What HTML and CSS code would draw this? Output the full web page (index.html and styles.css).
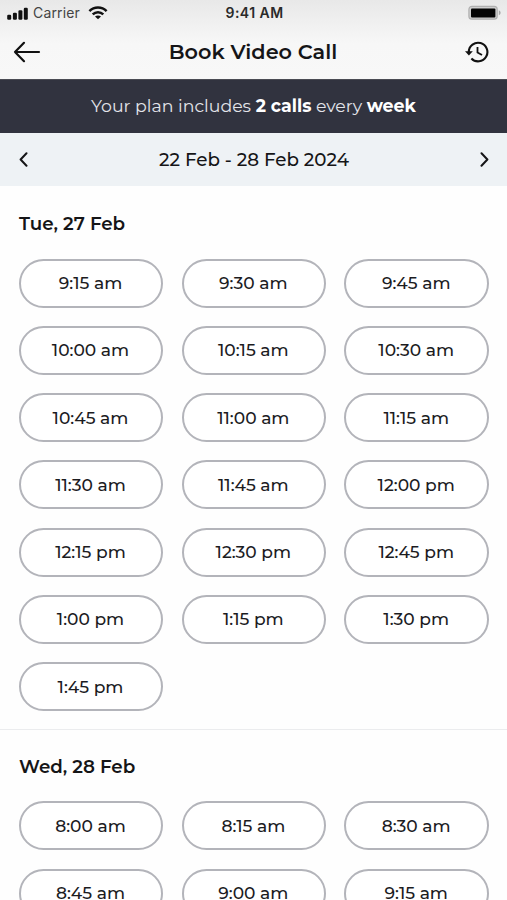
FILE: index.html
```html
<!DOCTYPE html>
<html lang="en">
<head>
<meta charset="utf-8">
<meta name="viewport" content="width=device-width, initial-scale=1">
<title>Book Video Call</title>
<link rel="stylesheet" href="styles.css">
</head>
<body>
<header class="top">
  <div class="status">
    <div class="carrier">
      <svg class="signal" width="22" height="13" viewBox="0 0 22 13"><rect x="0.2" y="7.7" width="4" height="5" rx="1.2"/><rect x="5.9" y="5.7" width="4" height="7" rx="1.2"/><rect x="11.4" y="3.2" width="4" height="9.5" rx="1.2"/><rect x="16.8" y="0.7" width="4" height="12" rx="1.2"/></svg>
      <span class="carrier-name">Carrier</span>
      <svg class="wifi" width="20" height="14" viewBox="0 0 20 14" fill="none" stroke="#111" stroke-width="2.5"><path d="M1.4 5.1C6.2 0.4 13.8 0.4 18.6 5.1"/><path d="M4.7 8.4C7.7 5.5 12.3 5.5 15.3 8.4"/><path d="M10 13.3L7 10.5C8.7 9 11.3 9 13 10.5Z" fill="#111" stroke="none"/></svg>
    </div>
    <time class="clock">9:41 AM</time>
    <svg class="battery" width="34" height="16" viewBox="0 0 34 16"><rect x="0.9" y="1.4" width="28.3" height="12.8" rx="3" fill="#cfcfcf" stroke="#b0b0b0" stroke-width="1.2"/><rect x="3" y="3.5" width="24.4" height="8.9" rx="1" fill="#050505"/><path d="M30.8 5.3C33.2 6 33.2 9.6 30.8 10.3Z" fill="#aaa"/></svg>
  </div>
  <nav class="bar">
    <svg class="back" width="28" height="22" viewBox="0 0 28 22" fill="none" stroke="#111" stroke-width="2.2" stroke-linecap="round" stroke-linejoin="round"><path d="M26 11H2M11 1.8L2 11L11 20.2"/></svg>
    <h1 class="title">Book Video Call</h1>
    <svg class="history" width="24" height="22" viewBox="0 0 24 22" fill="none" stroke="#111" stroke-width="2.1"><path d="M3.8 11A9.3 9.3 0 1 1 6.4 17.5"/><path d="M0 10.3H7.8L3.9 14.6Z" fill="#111" stroke="none"/><path d="M12.5 6V11.4L17 14.1" stroke-width="1.8"/></svg>
  </nav>
</header>
<div class="plan"><p class="plan-text">Your plan includes <b>2 calls</b> every <b>week</b></p></div>
<div class="week">
  <svg class="chevron" width="9" height="15" viewBox="0 0 9 15"><path d="M7.5 1.3L1.6 7.5L7.5 13.7"/></svg>
  <span class="range">22 Feb - 28 Feb 2024</span>
  <svg class="chevron" width="9" height="15" viewBox="0 0 9 15"><path d="M1.5 1.3L7.4 7.5L1.5 13.7"/></svg>
</div>
<main>
  <section class="day">
    <h2 class="date">Tue, 27 Feb</h2>
    <div class="slots">
      <button class="slot">9:15 am</button><button class="slot">9:30 am</button><button class="slot">9:45 am</button>
      <button class="slot">10:00 am</button><button class="slot">10:15 am</button><button class="slot">10:30 am</button>
      <button class="slot">10:45 am</button><button class="slot">11:00 am</button><button class="slot">11:15 am</button>
      <button class="slot">11:30 am</button><button class="slot">11:45 am</button><button class="slot">12:00 pm</button>
      <button class="slot">12:15 pm</button><button class="slot">12:30 pm</button><button class="slot">12:45 pm</button>
      <button class="slot">1:00 pm</button><button class="slot">1:15 pm</button><button class="slot">1:30 pm</button>
      <button class="slot">1:45 pm</button>
    </div>
  </section>
  <section class="day">
    <h2 class="date">Wed, 28 Feb</h2>
    <div class="slots">
      <button class="slot">8:00 am</button><button class="slot">8:15 am</button><button class="slot">8:30 am</button>
      <button class="slot">8:45 am</button><button class="slot">9:00 am</button><button class="slot">9:15 am</button>
    </div>
  </section>
</main>
</body>
</html>
```
FILE: styles.css
```css
* { box-sizing: border-box; }
body {
  margin: 0;
  height: 900px;
  overflow: hidden;
  background: #fefefe;
  color: #151517;
  font-family: Montserrat, Inter, sans-serif;
}
h1, h2, p { margin: 0; }
svg { display: block; flex: none; }

.top {
  height: 79px;
  background: linear-gradient(#e8e8e8, #f7f7f7 55%, #f8f8f8);
}
.status {
  display: grid;
  grid-template-columns: 1fr auto 1fr;
  align-items: center;
  height: 26px;
  padding: 0 5px 0 7px;
  font-family: Inter, sans-serif;
}
.carrier { display: flex; align-items: center; }
.signal { fill: #111; }
.carrier-name { margin: 0 8px 0 4px; font-size: 14px; color: #444; letter-spacing: 0.15px; line-height: 16px; padding-bottom: 1px; }
.clock { padding-bottom: 1px; font-size: 14px; font-weight: 600; color: #2a2a2a; letter-spacing: 0.45px; }
.battery { justify-self: end; }
.bar {
  display: flex;
  align-items: center;
  justify-content: space-between;
  height: 51px;
  padding: 0 18px 0 13px;
}
.title { font-size: 20.8px; font-weight: 600; }

.plan {
  display: flex;
  align-items: center;
  justify-content: center;
  height: 54px;
  padding-bottom: 2px;
  background: #31333f;
  border-top: 1px solid #4b4c54;
  color: #e3e4ea;
}
.plan-text { font-size: 17.35px; }
.plan-text b { font-weight: 700; color: #fff; }

.week {
  display: flex;
  align-items: center;
  justify-content: space-between;
  height: 53px;
  padding: 0 18px 0 19px;
  background: #eef2f5;
}
.chevron { fill: none; stroke: #151517; stroke-width: 2; stroke-linecap: round; stroke-linejoin: round; }
.range { font-size: 18.3px; font-weight: 500; }

.day { padding: 24px 18px 17.8px 18.7px; }
.day + .day { padding-top: 23px; border-top: 1px solid #ebecee; }
.date { height: 27px; line-height: 27px; padding-left: 0.3px; font-size: 18.3px; font-weight: 600; }
.slots {
  display: grid;
  grid-template-columns: repeat(3, 1fr);
  grid-auto-rows: 49px;
  gap: 18.25px;
  margin-top: 21.5px;
}
.slot {
  padding: 0 1px 1px 0;
  border: 2px solid #b3b4ba;
  border-radius: 25px;
  background: #fff;
  color: #1c1c1f;
  font: 500 17.1px Montserrat, Inter, sans-serif;
}
```
